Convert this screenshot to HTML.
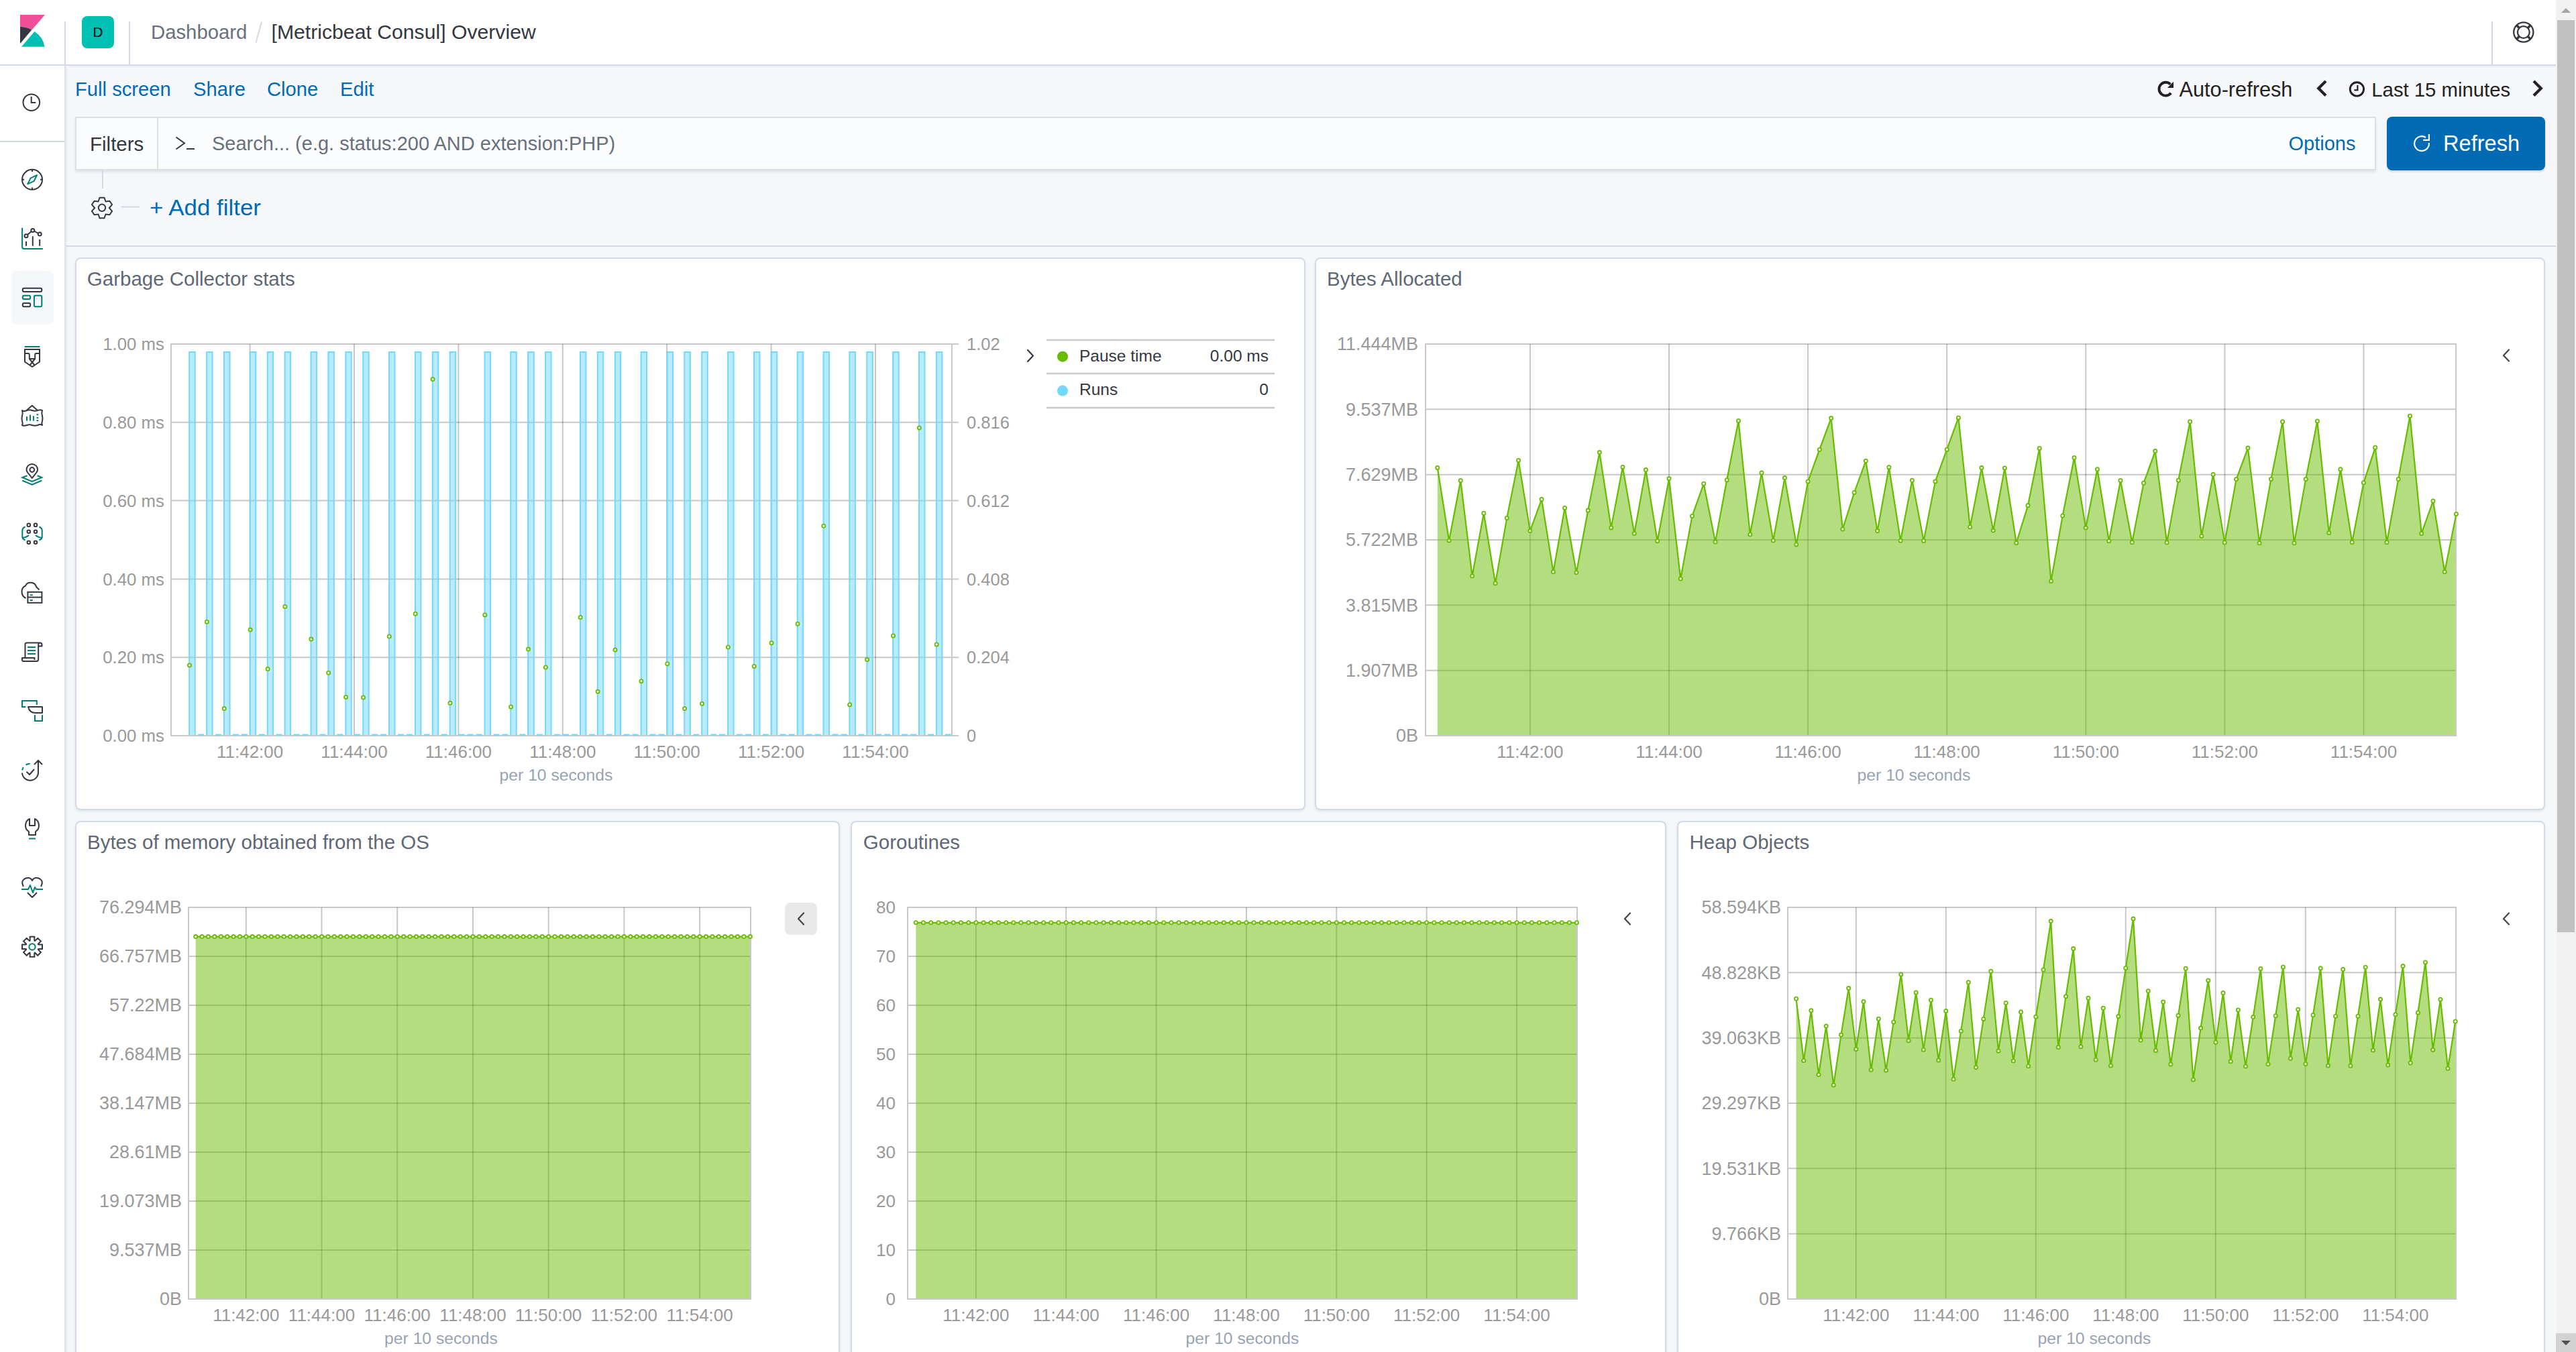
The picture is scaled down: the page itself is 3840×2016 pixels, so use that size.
<!DOCTYPE html>
<html><head><meta charset="utf-8"><title>[Metricbeat Consul] Overview - Kibana</title><style>
html,body{margin:0;padding:0;width:3840px;height:2016px;overflow:hidden;background:#F5F7FA;font-family:"Liberation Sans", sans-serif;}
.a{position:absolute;box-sizing:border-box}
svg text{font-family:"Liberation Sans", sans-serif}
</style></head><body>
<div class="a" style="left:0;top:0;width:3810px;height:2016px;background:#F5F7FA"></div>
<div class="a" style="left:0;top:0;width:3810px;height:98px;background:#fff;border-bottom:2px solid #D3DAE6;box-shadow:0 2px 4px rgba(0,0,0,0.05)"></div>
<div class="a" style="left:0;top:98px;width:96px;height:1918px;background:#fff"></div>
<div class="a" style="left:96px;top:98px;width:6px;height:1918px;background:linear-gradient(to right,#DADFE7 0,#DFE3EA 1px,#E6E9EE 2px,#EEF0F4 3.5px,#F5F7FA 6px)"></div>
<div class="a" style="left:0;top:210px;width:96px;height:2px;background:#D3DAE6"></div>
<div class="a" style="left:112px;top:174px;width:3430px;height:80px;background:#FBFCFD;border:2px solid #DEDFE3;box-shadow:0 3px 4px -1px rgba(152,162,179,0.3)"></div>
<div class="a" style="left:234px;top:176px;width:2px;height:76px;background:#DEDFE3"></div>
<div class="a" style="left:3558px;top:174px;width:236px;height:80px;background:#006BB4;border-radius:8px;box-shadow:0 2px 3px rgba(0,0,0,0.15)"></div>
<div class="a" style="left:98px;top:366px;width:3712px;height:2px;background:#D3DAE6"></div>
<div class="a" style="left:112px;top:384px;width:1834px;height:824px;background:#fff;border:2px solid #D3DAE6;border-radius:8px;box-shadow:0 2px 4px -1px rgba(152,162,179,0.35)"></div>
<div class="a" style="left:1960px;top:384px;width:1834px;height:824px;background:#fff;border:2px solid #D3DAE6;border-radius:8px;box-shadow:0 2px 4px -1px rgba(152,162,179,0.35)"></div>
<div class="a" style="left:112px;top:1224px;width:1140px;height:876px;background:#fff;border:2px solid #D3DAE6;border-radius:8px;box-shadow:0 2px 4px -1px rgba(152,162,179,0.35)"></div>
<div class="a" style="left:1268px;top:1224px;width:1216px;height:876px;background:#fff;border:2px solid #D3DAE6;border-radius:8px;box-shadow:0 2px 4px -1px rgba(152,162,179,0.35)"></div>
<div class="a" style="left:2500px;top:1224px;width:1294px;height:876px;background:#fff;border:2px solid #D3DAE6;border-radius:8px;box-shadow:0 2px 4px -1px rgba(152,162,179,0.35)"></div>
<div class="a" style="left:3810px;top:0;width:30px;height:2016px;background:#F1F1F1"></div>
<div class="a" style="left:3812px;top:30px;width:26px;height:1360px;background:#C1C1C1"></div>
<div class="a" style="left:3810px;top:1988px;width:30px;height:28px;background:#D2D2D2"></div>
<svg class="a" style="left:3810px;top:0" width="30" height="2016"><path d="M8 19L15 12L22 19Z" fill="#A3A3A3"/><path d="M8 1999L15 2006L22 1999Z" fill="#505050"/></svg>
<svg class="a" style="left:0;top:0" width="3840" height="2016">
<path d="M30 22H67L47.6 44.6Q40 40.2 30 40Z" fill="#F04E98"/>
<path d="M30 40Q40 40.2 47.3 44.5L30 65Z" fill="#343741"/>
<path d="M32 69.7L51.5 47Q64 55 66.6 69.7Z" fill="#00BFB3"/>
<rect x="122" y="24" width="48" height="48" rx="8" fill="#00BFB3"/>
<text x="146" y="55.2" font-size="20" fill="#111" text-anchor="middle" transform="translate(146 55.2) scale(1.04 1) translate(-146 -55.2)">D</text>
<path d="M390 32.5L381.5 63.5" stroke="#D3DAE6" stroke-width="2"/>
<text x="225" y="58.4" font-size="29.3" fill="#69707D">Dashboard</text>
<text x="404.5" y="58.4" font-size="30.2" fill="#343741">[Metricbeat Consul] Overview</text>
<path d="M97 32V96M193 32V96M3715 32V96" stroke="#D3DAE6" stroke-width="2"/>
<g fill="none" stroke="#343741"><circle cx="3761.8" cy="48" r="14.6" stroke-width="2.3"/><circle cx="3761.8" cy="48" r="8.9" stroke-width="2.3"/><path d="M3751.5 37.7L3755.5 41.7M3772.1 37.7L3768.1 41.7M3751.5 58.3L3755.5 54.3M3772.1 58.3L3768.1 54.3" stroke-width="3.6"/></g>
<g fill="none" stroke="#343741" stroke-width="2"><circle cx="46.8" cy="152.7" r="12.3"/><path d="M46.7 144V153H53.3"/></g>
<g fill="none" stroke="#343741" stroke-width="2"><circle cx="48" cy="267.8" r="15"/><path d="M48 253V256M48 279.6V282.6M33 267.8H36M60 267.8H63"/></g>
<path d="M55 261.2L45.6 265.6L41.2 274.4L50.6 270.2Z" fill="none" stroke="#017D73" stroke-width="2" stroke-linejoin="round"/>
<path d="M33.1 339.8V368Q33.1 370.9 36 370.9H63.8" fill="none" stroke="#017D73" stroke-width="2"/>
<g fill="none" stroke="#343741" stroke-width="2"><path d="M41 350L46.8 345M51 344.5L57 348M39 360V366.7M48.8 352.2V366.7M59.2 357.1V366.7"/><circle cx="39" cy="351.7" r="2.5"/><circle cx="48.8" cy="343.4" r="2.5"/><circle cx="59.2" cy="349.1" r="2.5"/></g>
<rect x="16.5" y="403.5" width="63.5" height="80" rx="8" fill="#F5F7FA"/>
<g fill="none" stroke-width="2"><rect x="33.8" y="429.8" width="28.5" height="5.2" rx="2.2" stroke="#343741"/><rect x="33.8" y="440.7" width="11.4" height="5.2" rx="2" stroke="#017D73"/><rect x="33.8" y="452" width="11.4" height="5.3" rx="2" stroke="#343741"/><rect x="50.9" y="440.7" width="11.4" height="16.6" rx="2" stroke="#017D73"/></g>
<path d="M36.6 517H59.5" stroke="#017D73" stroke-width="2"/>
<g fill="none" stroke="#343741" stroke-width="2" stroke-linejoin="round"><path d="M37 521H59V539.5L48 547L37 539.5Z"/><path d="M37 527H42Q43.8 527 43.8 529V535H52.2V529Q52.2 527 54 527H59M43.8 535L51.5 544.5M52.2 535L44.5 544.5"/></g>
<g fill="none" stroke="#343741" stroke-width="2" stroke-linejoin="round"><path d="M33 612Q36 614 40 612Q44 610.5 48 612Q52 613.5 56 612Q60 610.5 63 612Q61.5 616 63 620Q64 624 63 628Q61.5 631 63 634Q60 632 56 634Q52 635.5 48 634Q44 632.5 40 634Q36 635.5 33 634Q34.5 631 33 628Q32 624 33 620Q34.5 616 33 612Z"/><path d="M39.5 612L47.8 604.8L56 612"/></g>
<path d="M40 627.5V621M45 627.5V618.5M49.9 627.5V620.2M54.5 618.3H57.2M54.5 622.9H57.2M54.5 627H57.2" stroke="#017D73" stroke-width="2"/>
<g fill="none" stroke="#343741" stroke-width="2" stroke-linejoin="round"><path d="M47.8 712.9L41.5 705Q39.5 702.5 39.5 700.2A8.3 8.3 0 0 1 56.1 700.2Q56.1 702.5 54.1 705Z"/><circle cx="47.8" cy="700.5" r="3.4"/></g>
<path d="M40.6 709.3L33.3 712L47.8 718L62.3 712L55.6 709.3M33.3 716.5L47.8 722.7L62.3 716.5" fill="none" stroke="#017D73" stroke-width="2"/>
<g fill="none" stroke="#343741" stroke-width="2"><circle cx="42.8" cy="782.9" r="2.3"/><circle cx="53" cy="782.9" r="2.3"/><circle cx="42.8" cy="792.8" r="2.3"/><circle cx="53" cy="792.8" r="2.3"/><circle cx="42.8" cy="808.8" r="2.3"/><circle cx="53" cy="808.8" r="2.3"/></g>
<path d="M37.5 785.5Q33.3 787.5 33.3 791V801Q33.3 803.5 37.5 805.5M33.5 802Q40 801 43 798M58.5 785.5Q62.7 787.5 62.7 791V801Q62.7 803.5 58.5 805.5M62.5 802Q56 801 53 798" fill="none" stroke="#017D73" stroke-width="2"/>
<g fill="none" stroke="#343741" stroke-width="2"><path d="M38.5 892Q32 889 32.5 881Q33.5 875 38 873.5Q40 868.5 46 868.8Q52.5 869 54 875L58.5 879.5"/><rect x="41.4" y="882.8" width="21" height="16"/><path d="M41.4 890.6H62.4"/></g>
<path d="M44.7 887.2H48.8M44.7 894.9H48.8" stroke="#017D73" stroke-width="2"/>
<g fill="none" stroke="#343741" stroke-width="2" stroke-linejoin="round"><path d="M37.5 980V961Q37.5 958.5 40 958.5H59.5Q62.5 958.5 62.5 961.5V963.5H57.2M59.5 958.5Q57.2 958.5 57.2 961.5V983Q57.2 986 54.5 986H35Q33 986 33 984V981H51.5V984"/></g>
<path d="M41 965H53M41 970H53M41 975H53" stroke="#017D73" stroke-width="2"/>
<path d="M38.5 1054H33V1045H54.8V1051M52 1066V1075H63V1066" fill="none" stroke="#017D73" stroke-width="2"/>
<path d="M42 1054H63V1063H53Q44 1063 42 1054Z" fill="none" stroke="#343741" stroke-width="2" stroke-linejoin="round"/>
<path d="M33.2 1148.5Q33.8 1146 34.8 1144M38.5 1140.5Q41.5 1139 44.7 1138.8" fill="none" stroke="#017D73" stroke-width="2"/>
<g fill="none" stroke="#343741" stroke-width="2" stroke-linejoin="miter"><path d="M33 1152.5A12 12 0 0 0 57 1151V1134M51 1140L57 1134L63 1140"/><path d="M39.5 1150.8L44 1155L51 1147"/></g>
<path d="M44 1221V1231H52V1221Q58 1224 58 1231Q58 1237 53 1240V1245H43V1240Q38 1237 38 1231Q38 1224 44 1221Z" fill="none" stroke="#343741" stroke-width="2" stroke-linejoin="round"/>
<path d="M43 1250.5H53" stroke="#017D73" stroke-width="2"/>
<g fill="none" stroke="#343741" stroke-width="2" stroke-linejoin="round"><path d="M35 1322Q32 1316 34 1313Q37 1309 42 1309Q46 1309 48 1313Q50 1309 54 1309Q59 1309 62 1313Q64 1316 61 1322"/><path d="M41 1331L48 1338L55 1331"/></g>
<path d="M32 1326H42L45 1320L49 1331L52 1323L54 1326H64" fill="none" stroke="#017D73" stroke-width="2" stroke-linejoin="round"/>
<path d="M44.70 1401.80L44.70 1396.80L51.30 1396.80L51.30 1401.80Q51.29 1403.85 52.74 1402.40L56.27 1398.86L60.94 1403.53L57.40 1407.06Q55.95 1408.51 58.00 1408.50L63.00 1408.50L63.00 1415.10L58.00 1415.10Q55.95 1415.09 57.40 1416.54L60.94 1420.07L56.27 1424.74L52.74 1421.20Q51.29 1419.75 51.30 1421.80L51.30 1426.80L44.70 1426.80L44.70 1421.80Q44.71 1419.75 43.26 1421.20L39.73 1424.74L35.06 1420.07L38.60 1416.54Q40.05 1415.09 38.00 1415.10L33.00 1415.10L33.00 1408.50L38.00 1408.50Q40.05 1408.51 38.60 1407.06L35.06 1403.53L39.73 1398.86L43.26 1402.40Q44.71 1403.85 44.70 1401.80Z" fill="none" stroke="#343741" stroke-width="2" stroke-linejoin="miter"/>
<circle cx="48" cy="1411.8" r="4.6" fill="none" stroke="#017D73" stroke-width="2"/>
<polygon points="148.5,294.7 155.5,294.7 157.5,300.5 163.4,299.7 167.1,305.2 162.8,310.0 167.1,314.8 163.4,320.3 157.5,319.5 155.5,325.3 148.5,325.3 146.5,319.5 140.6,320.3 136.9,314.8 141.2,310.0 136.9,305.2 140.6,299.7 146.5,300.5" fill="none" stroke="#343741" stroke-width="2" stroke-linejoin="miter"/>
<circle cx="152" cy="309.8" r="5.2" fill="none" stroke="#343741" stroke-width="2"/>
<text x="112" y="143" font-size="29.2" fill="#006BB4">Full screen</text>
<text x="288" y="143" font-size="29.2" fill="#006BB4">Share</text>
<text x="398" y="143" font-size="29.2" fill="#006BB4">Clone</text>
<text x="507" y="143" font-size="29.2" fill="#006BB4">Edit</text>
<path d="M3235.4 125.7A9.9 9.9 0 1 0 3236.2 138.8" fill="none" stroke="#222" stroke-width="3.9"/>
<path d="M3240 121.8V131H3231Z" fill="#222"/>
<text x="3248.5" y="143.6" font-size="30.7" fill="#222">Auto-refresh</text>
<path d="M3467 121L3456.2 131.8L3467 142.6" fill="none" stroke="#222" stroke-width="4.2" stroke-linejoin="miter"/>
<g fill="none" stroke="#222"><circle cx="3513.4" cy="132.9" r="10.2" stroke-width="2.9"/><path d="M3514.4 127V134.4H3509.3" stroke-width="2.2"/></g>
<text x="3535.3" y="143.6" font-size="29.3" fill="#222">Last 15 minutes</text>
<path d="M3777 121L3787.8 131.8L3777 142.6" fill="none" stroke="#222" stroke-width="4.2"/>
<text x="134" y="224.8" font-size="29.5" fill="#343741">Filters</text>
<path d="M262.5 204.5L275 213.5L262.5 222.5M278 222H290" fill="none" stroke="#343741" stroke-width="2"/>
<text x="316" y="224" font-size="29" fill="#69707D">Search... (e.g. status:200 AND extension:PHP)</text>
<text x="3511.5" y="224.3" font-size="29" fill="#006BB4" text-anchor="end">Options</text>
<path d="M3616 205A10.9 10.9 0 1 0 3620.9 213.2" fill="none" stroke="#fff" stroke-width="2.2"/>
<path d="M3620.9 199.9V208.9H3612.2" fill="none" stroke="#fff" stroke-width="2.2"/>
<text x="3642" y="225" font-size="32.6" fill="#fff">Refresh</text>
<path d="M153 254V281M180.5 308.6H208" stroke="#D3DAE6" stroke-width="2"/>
<text x="223" y="321" font-size="32.5" fill="#006BB4" textLength="166" lengthAdjust="spacingAndGlyphs">+ Add filter</text>
<path d="M255 513H1419M255 629.8H1419M255 746.6H1419M255 863.4H1419M255 980.2H1419" stroke="rgba(0,0,0,0.22)" stroke-width="2" fill="none"/>
<path d="M372.6 513V1097M528 513V1097M683.4 513V1097M838.8 513V1097M994.2 513V1097M1149.6 513V1097M1305 513V1097" stroke="rgba(0,0,0,0.22)" stroke-width="2" fill="none"/>
<path d="M282.2 1097V525H290.7V1097ZM308.1 1097V525H316.6V1097ZM334 1097V525H342.5V1097ZM372.8 1097V525H381.3V1097ZM398.8 1097V525H407.2V1097ZM424.6 1097V525H433.1V1097ZM463.5 1097V525H472V1097ZM489.4 1097V525H497.9V1097ZM515.3 1097V525H523.8V1097ZM541.2 1097V525H549.7V1097ZM580 1097V525H588.5V1097ZM618.9 1097V525H627.4V1097ZM644.8 1097V525H653.3V1097ZM670.7 1097V525H679.2V1097ZM722.5 1097V525H731V1097ZM761.3 1097V525H769.8V1097ZM787.2 1097V525H795.8V1097ZM813.1 1097V525H821.6V1097ZM865 1097V525H873.5V1097ZM890.8 1097V525H899.3V1097ZM916.8 1097V525H925.2V1097ZM955.6 1097V525H964.1V1097ZM994.5 1097V525H1003V1097ZM1020.3 1097V525H1028.8V1097ZM1046.2 1097V525H1054.8V1097ZM1085.1 1097V525H1093.6V1097ZM1124 1097V525H1132.5V1097ZM1149.8 1097V525H1158.3V1097ZM1188.7 1097V525H1197.2V1097ZM1227.5 1097V525H1236V1097ZM1266.4 1097V525H1274.9V1097ZM1292.3 1097V525H1300.8V1097ZM1331.2 1097V525H1339.7V1097ZM1370 1097V525H1378.5V1097ZM1395.9 1097V525H1404.4V1097Z" fill="rgba(115,216,255,0.5)" stroke="#73D8FF" stroke-width="2"/>
<path d="M255 512V1097M254 1097H1420M1419 512V1097" stroke="#C8C8CA" stroke-width="2" fill="none"/>
<path d="M295.1 1095.6H304.1M321 1095.6H330M346.9 1095.6H355.9M359.9 1095.6H368.9M385.8 1095.6H394.8M411.7 1095.6H420.7M437.6 1095.6H446.6M450.5 1095.6H459.5M476.4 1095.6H485.4M502.3 1095.6H511.3M528.2 1095.6H537.2M554.1 1095.6H563.1M567.1 1095.6H576.1M593 1095.6H602M606 1095.6H615M631.8 1095.6H640.8M657.8 1095.6H666.8M683.6 1095.6H692.6M696.6 1095.6H705.6M709.5 1095.6H718.5M735.5 1095.6H744.5M748.4 1095.6H757.4M774.3 1095.6H783.3M800.2 1095.6H809.2M826.1 1095.6H835.1M839 1095.6H848M852 1095.6H861M877.9 1095.6H886.9M903.8 1095.6H912.8M929.7 1095.6H938.7M942.6 1095.6H951.6M968.5 1095.6H977.5M981.5 1095.6H990.5M1007.4 1095.6H1016.4M1033.3 1095.6H1042.3M1059.2 1095.6H1068.2M1072.1 1095.6H1081.1M1098 1095.6H1107M1111 1095.6H1120M1136.9 1095.6H1145.9M1162.8 1095.6H1171.8M1175.8 1095.6H1184.8M1201.6 1095.6H1210.6M1214.6 1095.6H1223.6M1240.5 1095.6H1249.5M1253.5 1095.6H1262.5M1279.3 1095.6H1288.3M1305.2 1095.6H1314.2M1318.2 1095.6H1327.2M1344.1 1095.6H1353.1M1357 1095.6H1366M1383 1095.6H1392M1408.8 1095.6H1417.8" stroke="#73D8FF" stroke-width="2.4" fill="none"/>
<path d="M1419 513H1429M1419 629.8H1429M1419 746.6H1429M1419 863.4H1429M1419 980.2H1429M1419 1097H1429" stroke="#C8C8CA" stroke-width="2"/>
<g fill="#fff" stroke="#68BC00" stroke-width="1.8"><circle cx="282.5" cy="991.9" r="2.6"/><circle cx="308.4" cy="927.2" r="2.6"/><circle cx="334.3" cy="1056.6" r="2.6"/><circle cx="373.1" cy="939.1" r="2.6"/><circle cx="399.1" cy="997.6" r="2.6"/><circle cx="424.9" cy="904.4" r="2.6"/><circle cx="463.8" cy="953.1" r="2.6"/><circle cx="489.7" cy="1003.3" r="2.6"/><circle cx="515.6" cy="1039.5" r="2.6"/><circle cx="541.5" cy="1040" r="2.6"/><circle cx="580.3" cy="949" r="2.6"/><circle cx="619.2" cy="915.3" r="2.6"/><circle cx="645.1" cy="565.4" r="2.6"/><circle cx="671" cy="1048.3" r="2.6"/><circle cx="722.8" cy="916.9" r="2.6"/><circle cx="761.6" cy="1054" r="2.6"/><circle cx="787.5" cy="968.1" r="2.6"/><circle cx="813.4" cy="995" r="2.6"/><circle cx="865.2" cy="920.5" r="2.6"/><circle cx="891.1" cy="1031.2" r="2.6"/><circle cx="917" cy="969.1" r="2.6"/><circle cx="955.9" cy="1015.7" r="2.6"/><circle cx="994.8" cy="989.8" r="2.6"/><circle cx="1020.6" cy="1056.6" r="2.6"/><circle cx="1046.5" cy="1049.3" r="2.6"/><circle cx="1085.4" cy="965" r="2.6"/><circle cx="1124.2" cy="993.5" r="2.6"/><circle cx="1150.1" cy="958.8" r="2.6"/><circle cx="1189" cy="930.3" r="2.6"/><circle cx="1227.8" cy="784.3" r="2.6"/><circle cx="1266.7" cy="1050.8" r="2.6"/><circle cx="1292.6" cy="983.6" r="2.6"/><circle cx="1331.5" cy="947.9" r="2.6"/><circle cx="1370.3" cy="637.9" r="2.6"/><circle cx="1396.2" cy="960.9" r="2.6"/></g>
<text x="245" y="522.2" font-size="25.8" fill="#999999" text-anchor="end">1.00 ms</text>
<text x="245" y="639" font-size="25.8" fill="#999999" text-anchor="end">0.80 ms</text>
<text x="245" y="755.8" font-size="25.8" fill="#999999" text-anchor="end">0.60 ms</text>
<text x="245" y="872.6" font-size="25.8" fill="#999999" text-anchor="end">0.40 ms</text>
<text x="245" y="989.4" font-size="25.8" fill="#999999" text-anchor="end">0.20 ms</text>
<text x="245" y="1106.2" font-size="25.8" fill="#999999" text-anchor="end">0.00 ms</text>
<text x="372.6" y="1129.7" font-size="26" fill="#999999" text-anchor="middle">11:42:00</text>
<text x="528" y="1129.7" font-size="26" fill="#999999" text-anchor="middle">11:44:00</text>
<text x="683.4" y="1129.7" font-size="26" fill="#999999" text-anchor="middle">11:46:00</text>
<text x="838.8" y="1129.7" font-size="26" fill="#999999" text-anchor="middle">11:48:00</text>
<text x="994.2" y="1129.7" font-size="26" fill="#999999" text-anchor="middle">11:50:00</text>
<text x="1149.6" y="1129.7" font-size="26" fill="#999999" text-anchor="middle">11:52:00</text>
<text x="1305" y="1129.7" font-size="26" fill="#999999" text-anchor="middle">11:54:00</text>
<text x="829" y="1164.1" font-size="24.7" fill="#98A2B3" text-anchor="middle">per 10 seconds</text>
<text x="1441" y="522.2" font-size="25.5" fill="#999999">1.02</text>
<text x="1441" y="639" font-size="25.5" fill="#999999">0.816</text>
<text x="1441" y="755.8" font-size="25.5" fill="#999999">0.612</text>
<text x="1441" y="872.6" font-size="25.5" fill="#999999">0.408</text>
<text x="1441" y="989.4" font-size="25.5" fill="#999999">0.204</text>
<text x="1441" y="1106.2" font-size="25.5" fill="#999999">0</text>
<path d="M1532 522L1540 530.5L1532 539" stroke="#343741" stroke-width="2.2" fill="none" stroke-linecap="round" stroke-linejoin="round"/>
<path d="M1560 507H1900M1560 557H1900M1560 608H1900" stroke="#C8C8CA" stroke-width="2.4"/>
<circle cx="1584" cy="531.7" r="8" fill="#68BC00"/>
<circle cx="1584" cy="582.6" r="8" fill="#73D8FF"/>
<text x="1609" y="538.7" font-size="24.5" fill="#343741">Pause time</text>
<text x="1891" y="538.7" font-size="24.5" fill="#343741" text-anchor="end">0.00 ms</text>
<text x="1609" y="588.7" font-size="24.5" fill="#343741">Runs</text>
<text x="1891" y="588.7" font-size="24.5" fill="#343741" text-anchor="end">0</text>
<path d="M2125 513H3661M2125 610.3H3661M2125 707.7H3661M2125 805H3661M2125 902.3H3661M2125 999.7H3661" stroke="rgba(0,0,0,0.22)" stroke-width="2" fill="none"/>
<path d="M2280.9 513V1097M2488 513V1097M2695.1 513V1097M2902.2 513V1097M3109.3 513V1097M3316.4 513V1097M3523.5 513V1097" stroke="rgba(0,0,0,0.22)" stroke-width="2" fill="none"/>
<polygon points="2142.8,1096 2142.8,697.4 2160.1,806.1 2177.3,716.5 2194.6,858.9 2211.8,765.2 2229.1,869.7 2246.3,772.4 2263.6,686.5 2280.9,791.6 2298.1,744.5 2315.4,852.7 2332.6,757.4 2349.9,853.7 2367.2,761.1 2384.4,674.6 2401.7,786.9 2418.9,696.4 2436.2,795.5 2453.4,700.6 2470.7,806.8 2488,713.6 2505.2,863 2522.5,769.5 2539.7,721.3 2557,808.1 2574.2,715.8 2591.5,627.4 2608.8,797 2626,705.1 2643.3,806 2660.5,712.6 2677.8,811.9 2695.1,717.9 2712.3,670.5 2729.6,623.6 2746.8,789 2764.1,734.4 2781.3,687.3 2798.6,791.6 2815.9,696.8 2833.1,806.3 2850.4,716.3 2867.6,806.5 2884.9,717.9 2902.2,670.2 2919.4,622.9 2936.7,785.8 2953.9,697.6 2971.2,791.1 2988.4,697.9 3005.7,809.5 3023,753.8 3040.2,668.4 3057.5,866.4 3074.7,769 3092,682.5 3109.2,787.1 3126.5,699.8 3143.8,806.8 3161,716.5 3178.3,808.7 3195.5,720.3 3212.8,672.6 3230.1,809 3247.3,716.3 3264.6,628.7 3281.8,799.4 3299.1,707.5 3316.3,809 3333.6,714.6 3350.9,668.1 3368.1,809.7 3385.4,714.4 3402.6,628.7 3419.9,809.8 3437.2,714.5 3454.4,627.9 3471.7,794.6 3488.9,699.8 3506.2,808.5 3523.4,719.8 3540.7,667.3 3558,808.7 3575.2,714.5 3592.5,620.2 3609.7,795.4 3627,747 3644.2,852.7 3661.5,766.4 3661.5,1096" fill="rgba(104,188,0,0.5)"/>
<path d="M2125 512V1097M2124 1097H3662M3661 512V1097" stroke="#C8C8CA" stroke-width="2" fill="none"/>
<polyline points="2142.8,697.4 2160.1,806.1 2177.3,716.5 2194.6,858.9 2211.8,765.2 2229.1,869.7 2246.3,772.4 2263.6,686.5 2280.9,791.6 2298.1,744.5 2315.4,852.7 2332.6,757.4 2349.9,853.7 2367.2,761.1 2384.4,674.6 2401.7,786.9 2418.9,696.4 2436.2,795.5 2453.4,700.6 2470.7,806.8 2488,713.6 2505.2,863 2522.5,769.5 2539.7,721.3 2557,808.1 2574.2,715.8 2591.5,627.4 2608.8,797 2626,705.1 2643.3,806 2660.5,712.6 2677.8,811.9 2695.1,717.9 2712.3,670.5 2729.6,623.6 2746.8,789 2764.1,734.4 2781.3,687.3 2798.6,791.6 2815.9,696.8 2833.1,806.3 2850.4,716.3 2867.6,806.5 2884.9,717.9 2902.2,670.2 2919.4,622.9 2936.7,785.8 2953.9,697.6 2971.2,791.1 2988.4,697.9 3005.7,809.5 3023,753.8 3040.2,668.4 3057.5,866.4 3074.7,769 3092,682.5 3109.2,787.1 3126.5,699.8 3143.8,806.8 3161,716.5 3178.3,808.7 3195.5,720.3 3212.8,672.6 3230.1,809 3247.3,716.3 3264.6,628.7 3281.8,799.4 3299.1,707.5 3316.3,809 3333.6,714.6 3350.9,668.1 3368.1,809.7 3385.4,714.4 3402.6,628.7 3419.9,809.8 3437.2,714.5 3454.4,627.9 3471.7,794.6 3488.9,699.8 3506.2,808.5 3523.4,719.8 3540.7,667.3 3558,808.7 3575.2,714.5 3592.5,620.2 3609.7,795.4 3627,747 3644.2,852.7 3661.5,766.4" fill="none" stroke="#68BC00" stroke-width="2.2" stroke-linejoin="round"/>
<g fill="#fff" stroke="#68BC00" stroke-width="1.8"><circle cx="2142.8" cy="697.4" r="2.6"/><circle cx="2160.1" cy="806.1" r="2.6"/><circle cx="2177.3" cy="716.5" r="2.6"/><circle cx="2194.6" cy="858.9" r="2.6"/><circle cx="2211.8" cy="765.2" r="2.6"/><circle cx="2229.1" cy="869.7" r="2.6"/><circle cx="2246.3" cy="772.4" r="2.6"/><circle cx="2263.6" cy="686.5" r="2.6"/><circle cx="2280.9" cy="791.6" r="2.6"/><circle cx="2298.1" cy="744.5" r="2.6"/><circle cx="2315.4" cy="852.7" r="2.6"/><circle cx="2332.6" cy="757.4" r="2.6"/><circle cx="2349.9" cy="853.7" r="2.6"/><circle cx="2367.2" cy="761.1" r="2.6"/><circle cx="2384.4" cy="674.6" r="2.6"/><circle cx="2401.7" cy="786.9" r="2.6"/><circle cx="2418.9" cy="696.4" r="2.6"/><circle cx="2436.2" cy="795.5" r="2.6"/><circle cx="2453.4" cy="700.6" r="2.6"/><circle cx="2470.7" cy="806.8" r="2.6"/><circle cx="2488" cy="713.6" r="2.6"/><circle cx="2505.2" cy="863" r="2.6"/><circle cx="2522.5" cy="769.5" r="2.6"/><circle cx="2539.7" cy="721.3" r="2.6"/><circle cx="2557" cy="808.1" r="2.6"/><circle cx="2574.2" cy="715.8" r="2.6"/><circle cx="2591.5" cy="627.4" r="2.6"/><circle cx="2608.8" cy="797" r="2.6"/><circle cx="2626" cy="705.1" r="2.6"/><circle cx="2643.3" cy="806" r="2.6"/><circle cx="2660.5" cy="712.6" r="2.6"/><circle cx="2677.8" cy="811.9" r="2.6"/><circle cx="2695.1" cy="717.9" r="2.6"/><circle cx="2712.3" cy="670.5" r="2.6"/><circle cx="2729.6" cy="623.6" r="2.6"/><circle cx="2746.8" cy="789" r="2.6"/><circle cx="2764.1" cy="734.4" r="2.6"/><circle cx="2781.3" cy="687.3" r="2.6"/><circle cx="2798.6" cy="791.6" r="2.6"/><circle cx="2815.9" cy="696.8" r="2.6"/><circle cx="2833.1" cy="806.3" r="2.6"/><circle cx="2850.4" cy="716.3" r="2.6"/><circle cx="2867.6" cy="806.5" r="2.6"/><circle cx="2884.9" cy="717.9" r="2.6"/><circle cx="2902.2" cy="670.2" r="2.6"/><circle cx="2919.4" cy="622.9" r="2.6"/><circle cx="2936.7" cy="785.8" r="2.6"/><circle cx="2953.9" cy="697.6" r="2.6"/><circle cx="2971.2" cy="791.1" r="2.6"/><circle cx="2988.4" cy="697.9" r="2.6"/><circle cx="3005.7" cy="809.5" r="2.6"/><circle cx="3023" cy="753.8" r="2.6"/><circle cx="3040.2" cy="668.4" r="2.6"/><circle cx="3057.5" cy="866.4" r="2.6"/><circle cx="3074.7" cy="769" r="2.6"/><circle cx="3092" cy="682.5" r="2.6"/><circle cx="3109.2" cy="787.1" r="2.6"/><circle cx="3126.5" cy="699.8" r="2.6"/><circle cx="3143.8" cy="806.8" r="2.6"/><circle cx="3161" cy="716.5" r="2.6"/><circle cx="3178.3" cy="808.7" r="2.6"/><circle cx="3195.5" cy="720.3" r="2.6"/><circle cx="3212.8" cy="672.6" r="2.6"/><circle cx="3230.1" cy="809" r="2.6"/><circle cx="3247.3" cy="716.3" r="2.6"/><circle cx="3264.6" cy="628.7" r="2.6"/><circle cx="3281.8" cy="799.4" r="2.6"/><circle cx="3299.1" cy="707.5" r="2.6"/><circle cx="3316.3" cy="809" r="2.6"/><circle cx="3333.6" cy="714.6" r="2.6"/><circle cx="3350.9" cy="668.1" r="2.6"/><circle cx="3368.1" cy="809.7" r="2.6"/><circle cx="3385.4" cy="714.4" r="2.6"/><circle cx="3402.6" cy="628.7" r="2.6"/><circle cx="3419.9" cy="809.8" r="2.6"/><circle cx="3437.2" cy="714.5" r="2.6"/><circle cx="3454.4" cy="627.9" r="2.6"/><circle cx="3471.7" cy="794.6" r="2.6"/><circle cx="3488.9" cy="699.8" r="2.6"/><circle cx="3506.2" cy="808.5" r="2.6"/><circle cx="3523.4" cy="719.8" r="2.6"/><circle cx="3540.7" cy="667.3" r="2.6"/><circle cx="3558" cy="808.7" r="2.6"/><circle cx="3575.2" cy="714.5" r="2.6"/><circle cx="3592.5" cy="620.2" r="2.6"/><circle cx="3609.7" cy="795.4" r="2.6"/><circle cx="3627" cy="747" r="2.6"/><circle cx="3644.2" cy="852.7" r="2.6"/><circle cx="3661.5" cy="766.4" r="2.6"/></g>
<text x="2114" y="522.2" font-size="27" fill="#999999" text-anchor="end">11.444MB</text>
<text x="2114" y="619.5" font-size="27" fill="#999999" text-anchor="end">9.537MB</text>
<text x="2114" y="716.9" font-size="27" fill="#999999" text-anchor="end">7.629MB</text>
<text x="2114" y="814.2" font-size="27" fill="#999999" text-anchor="end">5.722MB</text>
<text x="2114" y="911.5" font-size="27" fill="#999999" text-anchor="end">3.815MB</text>
<text x="2114" y="1008.9" font-size="27" fill="#999999" text-anchor="end">1.907MB</text>
<text x="2114" y="1106.2" font-size="27" fill="#999999" text-anchor="end">0B</text>
<text x="2280.9" y="1129.9" font-size="26" fill="#999999" text-anchor="middle">11:42:00</text>
<text x="2488" y="1129.9" font-size="26" fill="#999999" text-anchor="middle">11:44:00</text>
<text x="2695.1" y="1129.9" font-size="26" fill="#999999" text-anchor="middle">11:46:00</text>
<text x="2902.2" y="1129.9" font-size="26" fill="#999999" text-anchor="middle">11:48:00</text>
<text x="3109.3" y="1129.9" font-size="26" fill="#999999" text-anchor="middle">11:50:00</text>
<text x="3316.4" y="1129.9" font-size="26" fill="#999999" text-anchor="middle">11:52:00</text>
<text x="3523.5" y="1129.9" font-size="26" fill="#999999" text-anchor="middle">11:54:00</text>
<text x="2853" y="1164.1" font-size="24.7" fill="#98A2B3" text-anchor="middle">per 10 seconds</text>
<path d="M3740 521.5L3732 530L3740 538.5" stroke="#444" stroke-width="2.2" fill="none" stroke-linecap="round" stroke-linejoin="round"/>
<path d="M281 1353H1119M281 1426H1119M281 1499H1119M281 1572H1119M281 1645H1119M281 1718H1119M281 1791H1119M281 1864H1119" stroke="rgba(0,0,0,0.22)" stroke-width="2" fill="none"/>
<path d="M366.8 1353V1937M479.5 1353V1937M592.2 1353V1937M705 1353V1937M817.7 1353V1937M930.4 1353V1937M1043.1 1353V1937" stroke="rgba(0,0,0,0.22)" stroke-width="2" fill="none"/>
<polygon points="291.7,1936 291.7,1396.6 301.1,1396.6 310.5,1396.6 319.9,1396.6 329.3,1396.6 338.7,1396.6 348.1,1396.6 357.5,1396.6 366.8,1396.6 376.2,1396.6 385.6,1396.6 395,1396.6 404.4,1396.6 413.8,1396.6 423.2,1396.6 432.6,1396.6 442,1396.6 451.4,1396.6 460.8,1396.6 470.2,1396.6 479.6,1396.6 489,1396.6 498.3,1396.6 507.7,1396.6 517.1,1396.6 526.5,1396.6 535.9,1396.6 545.3,1396.6 554.7,1396.6 564.1,1396.6 573.5,1396.6 582.9,1396.6 592.3,1396.6 601.7,1396.6 611.1,1396.6 620.5,1396.6 629.8,1396.6 639.2,1396.6 648.6,1396.6 658,1396.6 667.4,1396.6 676.8,1396.6 686.2,1396.6 695.6,1396.6 705,1396.6 714.4,1396.6 723.8,1396.6 733.2,1396.6 742.6,1396.6 752,1396.6 761.4,1396.6 770.7,1396.6 780.1,1396.6 789.5,1396.6 798.9,1396.6 808.3,1396.6 817.7,1396.6 827.1,1396.6 836.5,1396.6 845.9,1396.6 855.3,1396.6 864.7,1396.6 874.1,1396.6 883.5,1396.6 892.9,1396.6 902.2,1396.6 911.6,1396.6 921,1396.6 930.4,1396.6 939.8,1396.6 949.2,1396.6 958.6,1396.6 968,1396.6 977.4,1396.6 986.8,1396.6 996.2,1396.6 1005.6,1396.6 1015,1396.6 1024.4,1396.6 1033.7,1396.6 1043.1,1396.6 1052.5,1396.6 1061.9,1396.6 1071.3,1396.6 1080.7,1396.6 1090.1,1396.6 1099.5,1396.6 1108.9,1396.6 1118.3,1396.6 1118.3,1936" fill="rgba(104,188,0,0.5)"/>
<path d="M281 1352V1937M280 1937H1120M1119 1352V1937" stroke="#C8C8CA" stroke-width="2" fill="none"/>
<polyline points="291.7,1396.6 301.1,1396.6 310.5,1396.6 319.9,1396.6 329.3,1396.6 338.7,1396.6 348.1,1396.6 357.5,1396.6 366.8,1396.6 376.2,1396.6 385.6,1396.6 395,1396.6 404.4,1396.6 413.8,1396.6 423.2,1396.6 432.6,1396.6 442,1396.6 451.4,1396.6 460.8,1396.6 470.2,1396.6 479.6,1396.6 489,1396.6 498.3,1396.6 507.7,1396.6 517.1,1396.6 526.5,1396.6 535.9,1396.6 545.3,1396.6 554.7,1396.6 564.1,1396.6 573.5,1396.6 582.9,1396.6 592.3,1396.6 601.7,1396.6 611.1,1396.6 620.5,1396.6 629.8,1396.6 639.2,1396.6 648.6,1396.6 658,1396.6 667.4,1396.6 676.8,1396.6 686.2,1396.6 695.6,1396.6 705,1396.6 714.4,1396.6 723.8,1396.6 733.2,1396.6 742.6,1396.6 752,1396.6 761.4,1396.6 770.7,1396.6 780.1,1396.6 789.5,1396.6 798.9,1396.6 808.3,1396.6 817.7,1396.6 827.1,1396.6 836.5,1396.6 845.9,1396.6 855.3,1396.6 864.7,1396.6 874.1,1396.6 883.5,1396.6 892.9,1396.6 902.2,1396.6 911.6,1396.6 921,1396.6 930.4,1396.6 939.8,1396.6 949.2,1396.6 958.6,1396.6 968,1396.6 977.4,1396.6 986.8,1396.6 996.2,1396.6 1005.6,1396.6 1015,1396.6 1024.4,1396.6 1033.7,1396.6 1043.1,1396.6 1052.5,1396.6 1061.9,1396.6 1071.3,1396.6 1080.7,1396.6 1090.1,1396.6 1099.5,1396.6 1108.9,1396.6 1118.3,1396.6" fill="none" stroke="#68BC00" stroke-width="2.2" stroke-linejoin="round"/>
<g fill="#fff" stroke="#68BC00" stroke-width="1.8"><circle cx="291.7" cy="1396.6" r="2.6"/><circle cx="301.1" cy="1396.6" r="2.6"/><circle cx="310.5" cy="1396.6" r="2.6"/><circle cx="319.9" cy="1396.6" r="2.6"/><circle cx="329.3" cy="1396.6" r="2.6"/><circle cx="338.7" cy="1396.6" r="2.6"/><circle cx="348.1" cy="1396.6" r="2.6"/><circle cx="357.5" cy="1396.6" r="2.6"/><circle cx="366.8" cy="1396.6" r="2.6"/><circle cx="376.2" cy="1396.6" r="2.6"/><circle cx="385.6" cy="1396.6" r="2.6"/><circle cx="395" cy="1396.6" r="2.6"/><circle cx="404.4" cy="1396.6" r="2.6"/><circle cx="413.8" cy="1396.6" r="2.6"/><circle cx="423.2" cy="1396.6" r="2.6"/><circle cx="432.6" cy="1396.6" r="2.6"/><circle cx="442" cy="1396.6" r="2.6"/><circle cx="451.4" cy="1396.6" r="2.6"/><circle cx="460.8" cy="1396.6" r="2.6"/><circle cx="470.2" cy="1396.6" r="2.6"/><circle cx="479.6" cy="1396.6" r="2.6"/><circle cx="489" cy="1396.6" r="2.6"/><circle cx="498.3" cy="1396.6" r="2.6"/><circle cx="507.7" cy="1396.6" r="2.6"/><circle cx="517.1" cy="1396.6" r="2.6"/><circle cx="526.5" cy="1396.6" r="2.6"/><circle cx="535.9" cy="1396.6" r="2.6"/><circle cx="545.3" cy="1396.6" r="2.6"/><circle cx="554.7" cy="1396.6" r="2.6"/><circle cx="564.1" cy="1396.6" r="2.6"/><circle cx="573.5" cy="1396.6" r="2.6"/><circle cx="582.9" cy="1396.6" r="2.6"/><circle cx="592.3" cy="1396.6" r="2.6"/><circle cx="601.7" cy="1396.6" r="2.6"/><circle cx="611.1" cy="1396.6" r="2.6"/><circle cx="620.5" cy="1396.6" r="2.6"/><circle cx="629.8" cy="1396.6" r="2.6"/><circle cx="639.2" cy="1396.6" r="2.6"/><circle cx="648.6" cy="1396.6" r="2.6"/><circle cx="658" cy="1396.6" r="2.6"/><circle cx="667.4" cy="1396.6" r="2.6"/><circle cx="676.8" cy="1396.6" r="2.6"/><circle cx="686.2" cy="1396.6" r="2.6"/><circle cx="695.6" cy="1396.6" r="2.6"/><circle cx="705" cy="1396.6" r="2.6"/><circle cx="714.4" cy="1396.6" r="2.6"/><circle cx="723.8" cy="1396.6" r="2.6"/><circle cx="733.2" cy="1396.6" r="2.6"/><circle cx="742.6" cy="1396.6" r="2.6"/><circle cx="752" cy="1396.6" r="2.6"/><circle cx="761.4" cy="1396.6" r="2.6"/><circle cx="770.7" cy="1396.6" r="2.6"/><circle cx="780.1" cy="1396.6" r="2.6"/><circle cx="789.5" cy="1396.6" r="2.6"/><circle cx="798.9" cy="1396.6" r="2.6"/><circle cx="808.3" cy="1396.6" r="2.6"/><circle cx="817.7" cy="1396.6" r="2.6"/><circle cx="827.1" cy="1396.6" r="2.6"/><circle cx="836.5" cy="1396.6" r="2.6"/><circle cx="845.9" cy="1396.6" r="2.6"/><circle cx="855.3" cy="1396.6" r="2.6"/><circle cx="864.7" cy="1396.6" r="2.6"/><circle cx="874.1" cy="1396.6" r="2.6"/><circle cx="883.5" cy="1396.6" r="2.6"/><circle cx="892.9" cy="1396.6" r="2.6"/><circle cx="902.2" cy="1396.6" r="2.6"/><circle cx="911.6" cy="1396.6" r="2.6"/><circle cx="921" cy="1396.6" r="2.6"/><circle cx="930.4" cy="1396.6" r="2.6"/><circle cx="939.8" cy="1396.6" r="2.6"/><circle cx="949.2" cy="1396.6" r="2.6"/><circle cx="958.6" cy="1396.6" r="2.6"/><circle cx="968" cy="1396.6" r="2.6"/><circle cx="977.4" cy="1396.6" r="2.6"/><circle cx="986.8" cy="1396.6" r="2.6"/><circle cx="996.2" cy="1396.6" r="2.6"/><circle cx="1005.6" cy="1396.6" r="2.6"/><circle cx="1015" cy="1396.6" r="2.6"/><circle cx="1024.4" cy="1396.6" r="2.6"/><circle cx="1033.7" cy="1396.6" r="2.6"/><circle cx="1043.1" cy="1396.6" r="2.6"/><circle cx="1052.5" cy="1396.6" r="2.6"/><circle cx="1061.9" cy="1396.6" r="2.6"/><circle cx="1071.3" cy="1396.6" r="2.6"/><circle cx="1080.7" cy="1396.6" r="2.6"/><circle cx="1090.1" cy="1396.6" r="2.6"/><circle cx="1099.5" cy="1396.6" r="2.6"/><circle cx="1108.9" cy="1396.6" r="2.6"/><circle cx="1118.3" cy="1396.6" r="2.6"/></g>
<text x="271" y="1362.2" font-size="27" fill="#999999" text-anchor="end">76.294MB</text>
<text x="271" y="1435.2" font-size="27" fill="#999999" text-anchor="end">66.757MB</text>
<text x="271" y="1508.2" font-size="27" fill="#999999" text-anchor="end">57.22MB</text>
<text x="271" y="1581.2" font-size="27" fill="#999999" text-anchor="end">47.684MB</text>
<text x="271" y="1654.2" font-size="27" fill="#999999" text-anchor="end">38.147MB</text>
<text x="271" y="1727.2" font-size="27" fill="#999999" text-anchor="end">28.61MB</text>
<text x="271" y="1800.2" font-size="27" fill="#999999" text-anchor="end">19.073MB</text>
<text x="271" y="1873.2" font-size="27" fill="#999999" text-anchor="end">9.537MB</text>
<text x="271" y="1946.2" font-size="27" fill="#999999" text-anchor="end">0B</text>
<text x="366.8" y="1970" font-size="26" fill="#999999" text-anchor="middle">11:42:00</text>
<text x="479.5" y="1970" font-size="26" fill="#999999" text-anchor="middle">11:44:00</text>
<text x="592.2" y="1970" font-size="26" fill="#999999" text-anchor="middle">11:46:00</text>
<text x="705" y="1970" font-size="26" fill="#999999" text-anchor="middle">11:48:00</text>
<text x="817.7" y="1970" font-size="26" fill="#999999" text-anchor="middle">11:50:00</text>
<text x="930.4" y="1970" font-size="26" fill="#999999" text-anchor="middle">11:52:00</text>
<text x="1043.1" y="1970" font-size="26" fill="#999999" text-anchor="middle">11:54:00</text>
<text x="657.5" y="2004" font-size="24.7" fill="#98A2B3" text-anchor="middle">per 10 seconds</text>
<rect x="1170" y="1346" width="48" height="48" rx="8" fill="#E9E9EA"/>
<path d="M1198 1361.5L1190 1370L1198 1378.5" stroke="#444" stroke-width="2.2" fill="none" stroke-linecap="round" stroke-linejoin="round"/>
<path d="M1353 1353H2351M1353 1426H2351M1353 1499H2351M1353 1572H2351M1353 1645H2351M1353 1718H2351M1353 1791H2351M1353 1864H2351" stroke="rgba(0,0,0,0.22)" stroke-width="2" fill="none"/>
<path d="M1454.9 1353V1937M1589.2 1353V1937M1723.6 1353V1937M1858 1353V1937M1992.3 1353V1937M2126.7 1353V1937M2261 1353V1937" stroke="rgba(0,0,0,0.22)" stroke-width="2" fill="none"/>
<polygon points="1365.3,1936 1365.3,1375.8 1376.5,1375.8 1387.7,1375.8 1398.9,1375.8 1410.1,1375.8 1421.3,1375.8 1432.5,1375.8 1443.7,1375.8 1454.9,1375.8 1466.1,1375.8 1477.3,1375.8 1488.5,1375.8 1499.7,1375.8 1510.8,1375.8 1522,1375.8 1533.2,1375.8 1544.4,1375.8 1555.6,1375.8 1566.8,1375.8 1578,1375.8 1589.2,1375.8 1600.4,1375.8 1611.6,1375.8 1622.8,1375.8 1634,1375.8 1645.2,1375.8 1656.4,1375.8 1667.6,1375.8 1678.8,1375.8 1690,1375.8 1701.2,1375.8 1712.4,1375.8 1723.6,1375.8 1734.8,1375.8 1746,1375.8 1757.2,1375.8 1768.4,1375.8 1779.6,1375.8 1790.7,1375.8 1801.9,1375.8 1813.1,1375.8 1824.3,1375.8 1835.5,1375.8 1846.7,1375.8 1857.9,1375.8 1869.1,1375.8 1880.3,1375.8 1891.5,1375.8 1902.7,1375.8 1913.9,1375.8 1925.1,1375.8 1936.3,1375.8 1947.5,1375.8 1958.7,1375.8 1969.9,1375.8 1981.1,1375.8 1992.3,1375.8 2003.5,1375.8 2014.7,1375.8 2025.9,1375.8 2037.1,1375.8 2048.3,1375.8 2059.5,1375.8 2070.6,1375.8 2081.8,1375.8 2093,1375.8 2104.2,1375.8 2115.4,1375.8 2126.6,1375.8 2137.8,1375.8 2149,1375.8 2160.2,1375.8 2171.4,1375.8 2182.6,1375.8 2193.8,1375.8 2205,1375.8 2216.2,1375.8 2227.4,1375.8 2238.6,1375.8 2249.8,1375.8 2261,1375.8 2272.2,1375.8 2283.4,1375.8 2294.6,1375.8 2305.8,1375.8 2317,1375.8 2328.2,1375.8 2339.4,1375.8 2350.5,1375.8 2350.5,1936" fill="rgba(104,188,0,0.5)"/>
<path d="M1353 1352V1937M1352 1937H2352M2351 1352V1937" stroke="#C8C8CA" stroke-width="2" fill="none"/>
<polyline points="1365.3,1375.8 1376.5,1375.8 1387.7,1375.8 1398.9,1375.8 1410.1,1375.8 1421.3,1375.8 1432.5,1375.8 1443.7,1375.8 1454.9,1375.8 1466.1,1375.8 1477.3,1375.8 1488.5,1375.8 1499.7,1375.8 1510.8,1375.8 1522,1375.8 1533.2,1375.8 1544.4,1375.8 1555.6,1375.8 1566.8,1375.8 1578,1375.8 1589.2,1375.8 1600.4,1375.8 1611.6,1375.8 1622.8,1375.8 1634,1375.8 1645.2,1375.8 1656.4,1375.8 1667.6,1375.8 1678.8,1375.8 1690,1375.8 1701.2,1375.8 1712.4,1375.8 1723.6,1375.8 1734.8,1375.8 1746,1375.8 1757.2,1375.8 1768.4,1375.8 1779.6,1375.8 1790.7,1375.8 1801.9,1375.8 1813.1,1375.8 1824.3,1375.8 1835.5,1375.8 1846.7,1375.8 1857.9,1375.8 1869.1,1375.8 1880.3,1375.8 1891.5,1375.8 1902.7,1375.8 1913.9,1375.8 1925.1,1375.8 1936.3,1375.8 1947.5,1375.8 1958.7,1375.8 1969.9,1375.8 1981.1,1375.8 1992.3,1375.8 2003.5,1375.8 2014.7,1375.8 2025.9,1375.8 2037.1,1375.8 2048.3,1375.8 2059.5,1375.8 2070.6,1375.8 2081.8,1375.8 2093,1375.8 2104.2,1375.8 2115.4,1375.8 2126.6,1375.8 2137.8,1375.8 2149,1375.8 2160.2,1375.8 2171.4,1375.8 2182.6,1375.8 2193.8,1375.8 2205,1375.8 2216.2,1375.8 2227.4,1375.8 2238.6,1375.8 2249.8,1375.8 2261,1375.8 2272.2,1375.8 2283.4,1375.8 2294.6,1375.8 2305.8,1375.8 2317,1375.8 2328.2,1375.8 2339.4,1375.8 2350.5,1375.8" fill="none" stroke="#68BC00" stroke-width="2.2" stroke-linejoin="round"/>
<g fill="#fff" stroke="#68BC00" stroke-width="1.8"><circle cx="1365.3" cy="1375.8" r="2.6"/><circle cx="1376.5" cy="1375.8" r="2.6"/><circle cx="1387.7" cy="1375.8" r="2.6"/><circle cx="1398.9" cy="1375.8" r="2.6"/><circle cx="1410.1" cy="1375.8" r="2.6"/><circle cx="1421.3" cy="1375.8" r="2.6"/><circle cx="1432.5" cy="1375.8" r="2.6"/><circle cx="1443.7" cy="1375.8" r="2.6"/><circle cx="1454.9" cy="1375.8" r="2.6"/><circle cx="1466.1" cy="1375.8" r="2.6"/><circle cx="1477.3" cy="1375.8" r="2.6"/><circle cx="1488.5" cy="1375.8" r="2.6"/><circle cx="1499.7" cy="1375.8" r="2.6"/><circle cx="1510.8" cy="1375.8" r="2.6"/><circle cx="1522" cy="1375.8" r="2.6"/><circle cx="1533.2" cy="1375.8" r="2.6"/><circle cx="1544.4" cy="1375.8" r="2.6"/><circle cx="1555.6" cy="1375.8" r="2.6"/><circle cx="1566.8" cy="1375.8" r="2.6"/><circle cx="1578" cy="1375.8" r="2.6"/><circle cx="1589.2" cy="1375.8" r="2.6"/><circle cx="1600.4" cy="1375.8" r="2.6"/><circle cx="1611.6" cy="1375.8" r="2.6"/><circle cx="1622.8" cy="1375.8" r="2.6"/><circle cx="1634" cy="1375.8" r="2.6"/><circle cx="1645.2" cy="1375.8" r="2.6"/><circle cx="1656.4" cy="1375.8" r="2.6"/><circle cx="1667.6" cy="1375.8" r="2.6"/><circle cx="1678.8" cy="1375.8" r="2.6"/><circle cx="1690" cy="1375.8" r="2.6"/><circle cx="1701.2" cy="1375.8" r="2.6"/><circle cx="1712.4" cy="1375.8" r="2.6"/><circle cx="1723.6" cy="1375.8" r="2.6"/><circle cx="1734.8" cy="1375.8" r="2.6"/><circle cx="1746" cy="1375.8" r="2.6"/><circle cx="1757.2" cy="1375.8" r="2.6"/><circle cx="1768.4" cy="1375.8" r="2.6"/><circle cx="1779.6" cy="1375.8" r="2.6"/><circle cx="1790.7" cy="1375.8" r="2.6"/><circle cx="1801.9" cy="1375.8" r="2.6"/><circle cx="1813.1" cy="1375.8" r="2.6"/><circle cx="1824.3" cy="1375.8" r="2.6"/><circle cx="1835.5" cy="1375.8" r="2.6"/><circle cx="1846.7" cy="1375.8" r="2.6"/><circle cx="1857.9" cy="1375.8" r="2.6"/><circle cx="1869.1" cy="1375.8" r="2.6"/><circle cx="1880.3" cy="1375.8" r="2.6"/><circle cx="1891.5" cy="1375.8" r="2.6"/><circle cx="1902.7" cy="1375.8" r="2.6"/><circle cx="1913.9" cy="1375.8" r="2.6"/><circle cx="1925.1" cy="1375.8" r="2.6"/><circle cx="1936.3" cy="1375.8" r="2.6"/><circle cx="1947.5" cy="1375.8" r="2.6"/><circle cx="1958.7" cy="1375.8" r="2.6"/><circle cx="1969.9" cy="1375.8" r="2.6"/><circle cx="1981.1" cy="1375.8" r="2.6"/><circle cx="1992.3" cy="1375.8" r="2.6"/><circle cx="2003.5" cy="1375.8" r="2.6"/><circle cx="2014.7" cy="1375.8" r="2.6"/><circle cx="2025.9" cy="1375.8" r="2.6"/><circle cx="2037.1" cy="1375.8" r="2.6"/><circle cx="2048.3" cy="1375.8" r="2.6"/><circle cx="2059.5" cy="1375.8" r="2.6"/><circle cx="2070.6" cy="1375.8" r="2.6"/><circle cx="2081.8" cy="1375.8" r="2.6"/><circle cx="2093" cy="1375.8" r="2.6"/><circle cx="2104.2" cy="1375.8" r="2.6"/><circle cx="2115.4" cy="1375.8" r="2.6"/><circle cx="2126.6" cy="1375.8" r="2.6"/><circle cx="2137.8" cy="1375.8" r="2.6"/><circle cx="2149" cy="1375.8" r="2.6"/><circle cx="2160.2" cy="1375.8" r="2.6"/><circle cx="2171.4" cy="1375.8" r="2.6"/><circle cx="2182.6" cy="1375.8" r="2.6"/><circle cx="2193.8" cy="1375.8" r="2.6"/><circle cx="2205" cy="1375.8" r="2.6"/><circle cx="2216.2" cy="1375.8" r="2.6"/><circle cx="2227.4" cy="1375.8" r="2.6"/><circle cx="2238.6" cy="1375.8" r="2.6"/><circle cx="2249.8" cy="1375.8" r="2.6"/><circle cx="2261" cy="1375.8" r="2.6"/><circle cx="2272.2" cy="1375.8" r="2.6"/><circle cx="2283.4" cy="1375.8" r="2.6"/><circle cx="2294.6" cy="1375.8" r="2.6"/><circle cx="2305.8" cy="1375.8" r="2.6"/><circle cx="2317" cy="1375.8" r="2.6"/><circle cx="2328.2" cy="1375.8" r="2.6"/><circle cx="2339.4" cy="1375.8" r="2.6"/><circle cx="2350.5" cy="1375.8" r="2.6"/></g>
<text x="1335" y="1362.2" font-size="26" fill="#999999" text-anchor="end">80</text>
<text x="1335" y="1435.2" font-size="26" fill="#999999" text-anchor="end">70</text>
<text x="1335" y="1508.2" font-size="26" fill="#999999" text-anchor="end">60</text>
<text x="1335" y="1581.2" font-size="26" fill="#999999" text-anchor="end">50</text>
<text x="1335" y="1654.2" font-size="26" fill="#999999" text-anchor="end">40</text>
<text x="1335" y="1727.2" font-size="26" fill="#999999" text-anchor="end">30</text>
<text x="1335" y="1800.2" font-size="26" fill="#999999" text-anchor="end">20</text>
<text x="1335" y="1873.2" font-size="26" fill="#999999" text-anchor="end">10</text>
<text x="1335" y="1946.2" font-size="26" fill="#999999" text-anchor="end">0</text>
<text x="1454.9" y="1970" font-size="26" fill="#999999" text-anchor="middle">11:42:00</text>
<text x="1589.2" y="1970" font-size="26" fill="#999999" text-anchor="middle">11:44:00</text>
<text x="1723.6" y="1970" font-size="26" fill="#999999" text-anchor="middle">11:46:00</text>
<text x="1858" y="1970" font-size="26" fill="#999999" text-anchor="middle">11:48:00</text>
<text x="1992.3" y="1970" font-size="26" fill="#999999" text-anchor="middle">11:50:00</text>
<text x="2126.7" y="1970" font-size="26" fill="#999999" text-anchor="middle">11:52:00</text>
<text x="2261" y="1970" font-size="26" fill="#999999" text-anchor="middle">11:54:00</text>
<text x="1852" y="2004" font-size="24.7" fill="#98A2B3" text-anchor="middle">per 10 seconds</text>
<path d="M2430 1361.5L2422 1370L2430 1378.5" stroke="#444" stroke-width="2.2" fill="none" stroke-linecap="round" stroke-linejoin="round"/>
<path d="M2665 1353H3661M2665 1450.3H3661M2665 1547.7H3661M2665 1645H3661M2665 1742.3H3661M2665 1839.7H3661" stroke="rgba(0,0,0,0.22)" stroke-width="2" fill="none"/>
<path d="M2766.8 1353V1937M2900.8 1353V1937M3034.8 1353V1937M3168.8 1353V1937M3302.8 1353V1937M3436.8 1353V1937M3570.8 1353V1937" stroke="rgba(0,0,0,0.22)" stroke-width="2" fill="none"/>
<polygon points="2677.5,1936 2677.5,1489.3 2688.7,1581.5 2699.8,1506.7 2711,1602.5 2722.2,1530.1 2733.3,1618 2744.5,1543.1 2755.7,1473.6 2766.8,1564.5 2778,1493.6 2789.2,1595.3 2800.3,1519.2 2811.5,1595.9 2822.7,1524 2833.8,1452.9 2845,1551.7 2856.2,1480 2867.3,1565.2 2878.5,1491.3 2889.7,1581 2900.8,1507.5 2912,1609.3 2923.2,1537.4 2934.3,1464.7 2945.5,1591.6 2956.7,1519.4 2967.8,1448.2 2979,1567.2 2990.2,1495.5 3001.3,1581.9 3012.5,1509 3023.7,1589.7 3034.8,1516.3 3046,1446 3057.2,1373.6 3068.3,1561.5 3079.5,1485.8 3090.7,1414.6 3101.8,1560.8 3113,1488.2 3124.2,1580.2 3135.3,1503.3 3146.5,1589 3157.7,1515.6 3168.8,1443.4 3180,1370.1 3191.2,1551.1 3202.3,1477.8 3213.5,1566.5 3224.7,1494.1 3235.8,1586.9 3247,1514.2 3258.2,1444.3 3269.4,1610 3280.5,1533.1 3291.7,1461.9 3302.9,1554.3 3314,1480.6 3325.2,1582.7 3336.4,1506 3347.5,1590 3358.7,1516.6 3369.9,1444.4 3381,1586.7 3392.2,1514.7 3403.4,1442 3414.5,1578.2 3425.7,1505.2 3436.9,1586.4 3448,1513.5 3459.2,1443.7 3470.4,1589.1 3481.5,1515.2 3492.7,1445.4 3503.9,1589.3 3515,1515.2 3526.2,1442.3 3537.4,1566.1 3548.5,1490.1 3559.7,1588.1 3570.9,1512.8 3582,1440.6 3593.2,1585 3604.4,1510 3615.5,1434.9 3626.7,1565.4 3637.9,1490.3 3649,1593.3 3660.2,1523 3660.2,1936" fill="rgba(104,188,0,0.5)"/>
<path d="M2665 1352V1937M2664 1937H3662M3661 1352V1937" stroke="#C8C8CA" stroke-width="2" fill="none"/>
<polyline points="2677.5,1489.3 2688.7,1581.5 2699.8,1506.7 2711,1602.5 2722.2,1530.1 2733.3,1618 2744.5,1543.1 2755.7,1473.6 2766.8,1564.5 2778,1493.6 2789.2,1595.3 2800.3,1519.2 2811.5,1595.9 2822.7,1524 2833.8,1452.9 2845,1551.7 2856.2,1480 2867.3,1565.2 2878.5,1491.3 2889.7,1581 2900.8,1507.5 2912,1609.3 2923.2,1537.4 2934.3,1464.7 2945.5,1591.6 2956.7,1519.4 2967.8,1448.2 2979,1567.2 2990.2,1495.5 3001.3,1581.9 3012.5,1509 3023.7,1589.7 3034.8,1516.3 3046,1446 3057.2,1373.6 3068.3,1561.5 3079.5,1485.8 3090.7,1414.6 3101.8,1560.8 3113,1488.2 3124.2,1580.2 3135.3,1503.3 3146.5,1589 3157.7,1515.6 3168.8,1443.4 3180,1370.1 3191.2,1551.1 3202.3,1477.8 3213.5,1566.5 3224.7,1494.1 3235.8,1586.9 3247,1514.2 3258.2,1444.3 3269.4,1610 3280.5,1533.1 3291.7,1461.9 3302.9,1554.3 3314,1480.6 3325.2,1582.7 3336.4,1506 3347.5,1590 3358.7,1516.6 3369.9,1444.4 3381,1586.7 3392.2,1514.7 3403.4,1442 3414.5,1578.2 3425.7,1505.2 3436.9,1586.4 3448,1513.5 3459.2,1443.7 3470.4,1589.1 3481.5,1515.2 3492.7,1445.4 3503.9,1589.3 3515,1515.2 3526.2,1442.3 3537.4,1566.1 3548.5,1490.1 3559.7,1588.1 3570.9,1512.8 3582,1440.6 3593.2,1585 3604.4,1510 3615.5,1434.9 3626.7,1565.4 3637.9,1490.3 3649,1593.3 3660.2,1523" fill="none" stroke="#68BC00" stroke-width="2.2" stroke-linejoin="round"/>
<g fill="#fff" stroke="#68BC00" stroke-width="1.8"><circle cx="2677.5" cy="1489.3" r="2.6"/><circle cx="2688.7" cy="1581.5" r="2.6"/><circle cx="2699.8" cy="1506.7" r="2.6"/><circle cx="2711" cy="1602.5" r="2.6"/><circle cx="2722.2" cy="1530.1" r="2.6"/><circle cx="2733.3" cy="1618" r="2.6"/><circle cx="2744.5" cy="1543.1" r="2.6"/><circle cx="2755.7" cy="1473.6" r="2.6"/><circle cx="2766.8" cy="1564.5" r="2.6"/><circle cx="2778" cy="1493.6" r="2.6"/><circle cx="2789.2" cy="1595.3" r="2.6"/><circle cx="2800.3" cy="1519.2" r="2.6"/><circle cx="2811.5" cy="1595.9" r="2.6"/><circle cx="2822.7" cy="1524" r="2.6"/><circle cx="2833.8" cy="1452.9" r="2.6"/><circle cx="2845" cy="1551.7" r="2.6"/><circle cx="2856.2" cy="1480" r="2.6"/><circle cx="2867.3" cy="1565.2" r="2.6"/><circle cx="2878.5" cy="1491.3" r="2.6"/><circle cx="2889.7" cy="1581" r="2.6"/><circle cx="2900.8" cy="1507.5" r="2.6"/><circle cx="2912" cy="1609.3" r="2.6"/><circle cx="2923.2" cy="1537.4" r="2.6"/><circle cx="2934.3" cy="1464.7" r="2.6"/><circle cx="2945.5" cy="1591.6" r="2.6"/><circle cx="2956.7" cy="1519.4" r="2.6"/><circle cx="2967.8" cy="1448.2" r="2.6"/><circle cx="2979" cy="1567.2" r="2.6"/><circle cx="2990.2" cy="1495.5" r="2.6"/><circle cx="3001.3" cy="1581.9" r="2.6"/><circle cx="3012.5" cy="1509" r="2.6"/><circle cx="3023.7" cy="1589.7" r="2.6"/><circle cx="3034.8" cy="1516.3" r="2.6"/><circle cx="3046" cy="1446" r="2.6"/><circle cx="3057.2" cy="1373.6" r="2.6"/><circle cx="3068.3" cy="1561.5" r="2.6"/><circle cx="3079.5" cy="1485.8" r="2.6"/><circle cx="3090.7" cy="1414.6" r="2.6"/><circle cx="3101.8" cy="1560.8" r="2.6"/><circle cx="3113" cy="1488.2" r="2.6"/><circle cx="3124.2" cy="1580.2" r="2.6"/><circle cx="3135.3" cy="1503.3" r="2.6"/><circle cx="3146.5" cy="1589" r="2.6"/><circle cx="3157.7" cy="1515.6" r="2.6"/><circle cx="3168.8" cy="1443.4" r="2.6"/><circle cx="3180" cy="1370.1" r="2.6"/><circle cx="3191.2" cy="1551.1" r="2.6"/><circle cx="3202.3" cy="1477.8" r="2.6"/><circle cx="3213.5" cy="1566.5" r="2.6"/><circle cx="3224.7" cy="1494.1" r="2.6"/><circle cx="3235.8" cy="1586.9" r="2.6"/><circle cx="3247" cy="1514.2" r="2.6"/><circle cx="3258.2" cy="1444.3" r="2.6"/><circle cx="3269.4" cy="1610" r="2.6"/><circle cx="3280.5" cy="1533.1" r="2.6"/><circle cx="3291.7" cy="1461.9" r="2.6"/><circle cx="3302.9" cy="1554.3" r="2.6"/><circle cx="3314" cy="1480.6" r="2.6"/><circle cx="3325.2" cy="1582.7" r="2.6"/><circle cx="3336.4" cy="1506" r="2.6"/><circle cx="3347.5" cy="1590" r="2.6"/><circle cx="3358.7" cy="1516.6" r="2.6"/><circle cx="3369.9" cy="1444.4" r="2.6"/><circle cx="3381" cy="1586.7" r="2.6"/><circle cx="3392.2" cy="1514.7" r="2.6"/><circle cx="3403.4" cy="1442" r="2.6"/><circle cx="3414.5" cy="1578.2" r="2.6"/><circle cx="3425.7" cy="1505.2" r="2.6"/><circle cx="3436.9" cy="1586.4" r="2.6"/><circle cx="3448" cy="1513.5" r="2.6"/><circle cx="3459.2" cy="1443.7" r="2.6"/><circle cx="3470.4" cy="1589.1" r="2.6"/><circle cx="3481.5" cy="1515.2" r="2.6"/><circle cx="3492.7" cy="1445.4" r="2.6"/><circle cx="3503.9" cy="1589.3" r="2.6"/><circle cx="3515" cy="1515.2" r="2.6"/><circle cx="3526.2" cy="1442.3" r="2.6"/><circle cx="3537.4" cy="1566.1" r="2.6"/><circle cx="3548.5" cy="1490.1" r="2.6"/><circle cx="3559.7" cy="1588.1" r="2.6"/><circle cx="3570.9" cy="1512.8" r="2.6"/><circle cx="3582" cy="1440.6" r="2.6"/><circle cx="3593.2" cy="1585" r="2.6"/><circle cx="3604.4" cy="1510" r="2.6"/><circle cx="3615.5" cy="1434.9" r="2.6"/><circle cx="3626.7" cy="1565.4" r="2.6"/><circle cx="3637.9" cy="1490.3" r="2.6"/><circle cx="3649" cy="1593.3" r="2.6"/><circle cx="3660.2" cy="1523" r="2.6"/></g>
<text x="2655" y="1362.2" font-size="27" fill="#999999" text-anchor="end">58.594KB</text>
<text x="2655" y="1459.5" font-size="27" fill="#999999" text-anchor="end">48.828KB</text>
<text x="2655" y="1556.9" font-size="27" fill="#999999" text-anchor="end">39.063KB</text>
<text x="2655" y="1654.2" font-size="27" fill="#999999" text-anchor="end">29.297KB</text>
<text x="2655" y="1751.5" font-size="27" fill="#999999" text-anchor="end">19.531KB</text>
<text x="2655" y="1848.9" font-size="27" fill="#999999" text-anchor="end">9.766KB</text>
<text x="2655" y="1946.2" font-size="27" fill="#999999" text-anchor="end">0B</text>
<text x="2766.8" y="1970" font-size="26" fill="#999999" text-anchor="middle">11:42:00</text>
<text x="2900.8" y="1970" font-size="26" fill="#999999" text-anchor="middle">11:44:00</text>
<text x="3034.8" y="1970" font-size="26" fill="#999999" text-anchor="middle">11:46:00</text>
<text x="3168.8" y="1970" font-size="26" fill="#999999" text-anchor="middle">11:48:00</text>
<text x="3302.8" y="1970" font-size="26" fill="#999999" text-anchor="middle">11:50:00</text>
<text x="3436.8" y="1970" font-size="26" fill="#999999" text-anchor="middle">11:52:00</text>
<text x="3570.8" y="1970" font-size="26" fill="#999999" text-anchor="middle">11:54:00</text>
<text x="3122" y="2004" font-size="24.7" fill="#98A2B3" text-anchor="middle">per 10 seconds</text>
<path d="M3740 1361.5L3732 1370L3740 1378.5" stroke="#444" stroke-width="2.2" fill="none" stroke-linecap="round" stroke-linejoin="round"/>
<text x="129.8" y="426" font-size="29.5" fill="#5E6775">Garbage Collector stats</text>
<text x="1978" y="426" font-size="29.5" fill="#5E6775">Bytes Allocated</text>
<text x="130" y="1266" font-size="29.5" fill="#5E6775">Bytes of memory obtained from the OS</text>
<text x="1286.8" y="1266" font-size="29.5" fill="#5E6775">Goroutines</text>
<text x="2518.5" y="1266" font-size="29.5" fill="#5E6775">Heap Objects</text>
</svg>
<script>(function(){var w=window.innerWidth;if(w&&Math.abs(w-3840)>4){document.documentElement.style.zoom=w/3840;}})();</script>
</body></html>
